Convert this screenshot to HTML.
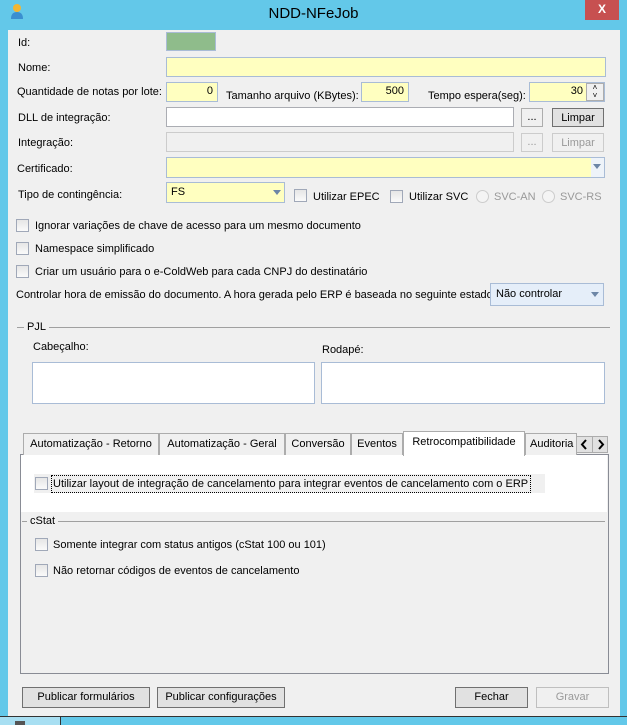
<!DOCTYPE html>
<html><head><meta charset="utf-8"><style>
*{box-sizing:border-box;margin:0;padding:0}
body{width:627px;height:725px;overflow:hidden;background:#63c8e9;font-family:"Liberation Sans",sans-serif;font-size:11px;color:#000;position:relative}
.a{position:absolute}
.t{position:absolute;white-space:nowrap;line-height:16px}
.box{position:absolute;border:1px solid #abadb3;background:#fff}
.y{background:#ffffc0;border-color:#a9bcd6}
.btn{position:absolute;border:1px solid #adadad;background:#e1e1e1;text-align:center;line-height:19px}
.cb{position:absolute;width:13px;height:13px;border:1px solid #a0a8b8;background:linear-gradient(#e6e6e6,#fafafa)}
.rd{position:absolute;width:13px;height:13px;border:1px solid #ccc;border-radius:50%;background:#f4f4f4}
.tab{position:absolute;top:433px;height:22px;border:1px solid #acacac;border-bottom:none;background:#f0f0f0;text-align:center;line-height:21px}
</style></head><body>
<div class="a" style="left:8px;top:30px;width:612px;height:687px;background:#f0f0f0"></div>
<div class="t" style="left:0;width:627px;top:5px;text-align:center;font-size:15px;line-height:17px">NDD-NFeJob</div>
<div class="a" style="left:585px;top:0;width:34px;height:20px;background:#c75050;color:#fff;text-align:center;font-weight:bold;font-size:12px;line-height:18px">X</div>
<svg class="a" style="left:10px;top:3px" width="14" height="16"><circle cx="7" cy="5" r="4" fill="#f2b632"/><path d="M1 16 Q1 9 7 9 Q13 9 13 16Z" fill="#3a8fd0"/></svg>

<div class="t" style="left:18px;top:35px">Id:</div>
<div class="a" style="left:166px;top:32px;width:50px;height:19px;background:#8fbc8b;border:1px solid #a9bcd6"></div>
<div class="t" style="left:18px;top:60px">Nome:</div>
<div class="box y" style="left:166px;top:57px;width:440px;height:20px"></div>
<div class="t" style="left:17px;top:84px">Quantidade de notas por lote:</div>
<div class="box y" style="left:166px;top:82px;width:52px;height:20px;text-align:right;padding-right:4px;line-height:17px">0</div>
<div class="t" style="left:226px;top:88px">Tamanho arquivo (KBytes):</div>
<div class="box y" style="left:361px;top:82px;width:48px;height:20px;text-align:right;padding-right:4px;line-height:17px">500</div>
<div class="t" style="left:428px;top:88px">Tempo espera(seg):</div>
<div class="box y" style="left:529px;top:82px;width:76px;height:20px;text-align:right;padding-right:21px;line-height:17px">30</div>
<div class="a" style="left:586px;top:83px;width:18px;height:18px;background:#f0f0f0;border:1px solid #adadad;font-size:8px;line-height:8px;text-align:center">˄<br>˅</div>
<div class="t" style="left:18px;top:110px">DLL de integração:</div>
<div class="box" style="left:166px;top:107px;width:348px;height:20px"></div>
<div class="btn" style="left:521px;top:108px;width:22px;height:19px;background:#f0f0f0;line-height:16px">...</div>
<div class="btn" style="left:552px;top:108px;width:52px;height:19px;border-color:#707070;line-height:18px">Limpar</div>
<div class="t" style="left:18px;top:135px">Integração:</div>
<div class="box" style="left:166px;top:132px;width:348px;height:20px;background:#f0f0f0;border-color:#ccc"></div>
<div class="btn" style="left:521px;top:133px;width:22px;height:19px;background:#f0f0f0;border-color:#ccc;color:#999;line-height:16px">...</div>
<div class="btn" style="left:552px;top:133px;width:52px;height:19px;background:#f0f0f0;border-color:#ccc;color:#999;line-height:18px">Limpar</div>
<div class="t" style="left:17px;top:161px">Certificado:</div>
<div class="box y" style="left:166px;top:157px;width:439px;height:21px"></div>
<div class="a" style="left:591px;top:158px;width:13px;height:19px;background:#eef3f9"></div>
<svg class="a" style="left:593px;top:164px" width="9" height="6"><path d="M0 0H8L4 5Z" fill="#6d86a6"/></svg>
<div class="t" style="left:18px;top:187px">Tipo de contingência:</div>
<div class="box y" style="left:166px;top:182px;width:119px;height:21px;padding-left:4px;line-height:18px">FS</div>
<svg class="a" style="left:273px;top:190px" width="9" height="6"><path d="M0 0H8L4 5Z" fill="#6d86a6"/></svg>
<div class="cb" style="left:294px;top:189px"></div><div class="t" style="left:313px;top:189px">Utilizar EPEC</div>
<div class="cb" style="left:390px;top:190px"></div><div class="t" style="left:409px;top:189px">Utilizar SVC</div>
<div class="rd" style="left:476px;top:190px"></div><div class="t" style="left:494px;top:189px;color:#999">SVC-AN</div>
<div class="rd" style="left:542px;top:190px"></div><div class="t" style="left:560px;top:189px;color:#999">SVC-RS</div>

<div class="cb" style="left:16px;top:219px"></div><div class="t" style="left:35px;top:218px">Ignorar variações de chave de acesso para um mesmo documento</div>
<div class="cb" style="left:16px;top:242px"></div><div class="t" style="left:35px;top:241px">Namespace simplificado</div>
<div class="cb" style="left:16px;top:265px"></div><div class="t" style="left:35px;top:264px">Criar um usuário para o e-ColdWeb para cada CNPJ do destinatário</div>
<div class="t" style="left:16px;top:287px">Controlar hora de emissão do documento. A hora gerada pelo ERP é baseada no seguinte estado:</div>
<div class="a" style="left:490px;top:283px;width:114px;height:23px;background:#e5eef9;border:1px solid #a9bcd6;padding:2px 5px;line-height:17px">Não controlar</div>
<svg class="a" style="left:591px;top:292px" width="9" height="6"><path d="M0 0H8L4 5Z" fill="#6d86a6"/></svg>

<div class="a" style="left:17px;top:327px;width:593px;height:1px;background:#a0a0a0"></div>
<div class="t" style="left:24px;top:319px;background:#f0f0f0;padding:0 3px">PJL</div>
<div class="t" style="left:33px;top:339px">Cabeçalho:</div>
<div class="t" style="left:322px;top:342px">Rodapé:</div>
<div class="box" style="left:32px;top:362px;width:283px;height:42px;border-color:#a9bcd6"></div>
<div class="box" style="left:321px;top:362px;width:284px;height:42px;border-color:#a9bcd6"></div>

<div class="a" style="left:20px;top:454px;width:589px;height:220px;border:1px solid #898c95;background:#f0f0f0"></div>
<div class="a" style="left:21px;top:455px;width:586px;height:57px;background:#fff"></div>
<div class="tab" style="left:23px;width:136px">Automatização - Retorno</div>
<div class="tab" style="left:159px;width:126px">Automatização - Geral</div>
<div class="tab" style="left:285px;width:66px">Conversão</div>
<div class="tab" style="left:351px;width:52px">Eventos</div>
<div class="tab" style="left:403px;top:431px;width:122px;height:25px;background:#fff;line-height:20px">Retrocompatibilidade</div>
<div class="tab" style="left:525px;width:52px;text-align:left;padding-left:4px;overflow:hidden">Auditoria</div>
<div class="a" style="left:576px;top:436px;width:32px;height:17px;border:1px solid #acacac;background:#e1e1e1"></div>
<div class="a" style="left:592px;top:436px;width:1px;height:17px;background:#acacac"></div>
<svg class="a" style="left:580px;top:439px" width="26" height="11"><path d="M6 1L2 5.5 6 10" stroke="#000" stroke-width="2" fill="none"/><path d="M19 1L23 5.5 19 10" stroke="#000" stroke-width="2" fill="none"/></svg>
<div class="a" style="left:34px;top:474px;width:511px;height:19px;background:#f0f0f0"></div>
<div class="cb" style="left:35px;top:477px"></div>
<div class="t" style="left:51px;top:475px;border:1px dotted #000;padding:0 2px 0 1px">Utilizar layout de integração de cancelamento para integrar eventos de cancelamento com o ERP</div>
<div class="a" style="left:22px;top:521px;width:583px;height:1px;background:#a0a0a0"></div>
<div class="t" style="left:27px;top:513px;background:#f0f0f0;padding:0 3px">cStat</div>
<div class="cb" style="left:35px;top:538px"></div><div class="t" style="left:53px;top:537px">Somente integrar com status antigos (cStat 100 ou 101)</div>
<div class="cb" style="left:35px;top:564px"></div><div class="t" style="left:53px;top:563px">Não retornar códigos de eventos de cancelamento</div>

<div class="btn" style="left:22px;top:687px;width:128px;height:21px;border-color:#707070">Publicar formulários</div>
<div class="btn" style="left:157px;top:687px;width:128px;height:21px;border-color:#707070">Publicar configurações</div>
<div class="btn" style="left:455px;top:687px;width:73px;height:21px;border-color:#707070">Fechar</div>
<div class="btn" style="left:536px;top:687px;width:73px;height:21px;background:#f0f0f0;border-color:#bfbfbf;color:#9a9a9a">Gravar</div>

<div class="a" style="left:0;top:716px;width:627px;height:1px;background:#333"></div>
<div class="a" style="left:0;top:717px;width:61px;height:8px;background:#a8dff2;border-right:1px solid #333"></div>
<div class="a" style="left:15px;top:721px;width:10px;height:4px;background:#555"></div>
</body></html>
